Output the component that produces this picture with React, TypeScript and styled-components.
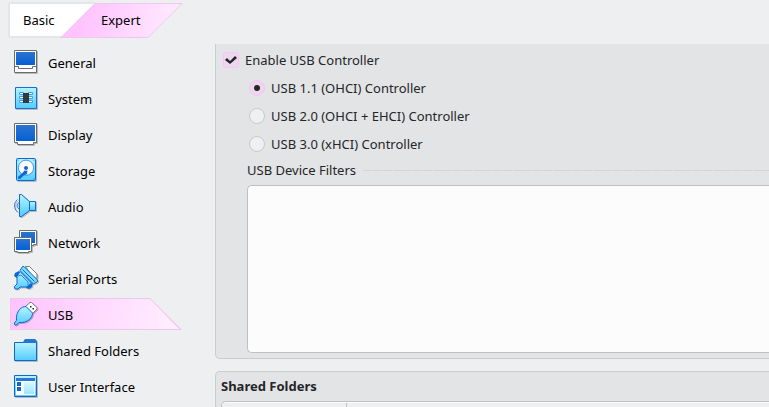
import React, { useState } from "react";
import styled, { createGlobalStyle, css } from "styled-components";

const GlobalStyle = createGlobalStyle`
  * { box-sizing: border-box; }
  body {
    margin: 0;
    background: #eeeff1;
    color: #232629;
    font: 13px/20px "Noto Sans", sans-serif;
  }
  button, input { font: inherit; color: inherit; margin: 0; }
`;

const Page = styled.div`
  display: flex;
  flex-direction: column;
  height: 100vh;
  overflow: hidden;
`;

const TabBar = styled.header`
  display: flex;
  flex: none;
  padding: 2px 8px 6px;
`;

const shape = css`
  content: "";
  position: absolute;
  inset: 0;
  z-index: -1;
`;

const Tab = styled.button<{ $active?: boolean }>`
  position: relative;
  isolation: isolate;
  height: 36px;
  border: 0;
  background: none;
  color: #000;
  text-align: left;
  ${(p) =>
    p.$active
      ? css`
          width: 123px;
          margin-left: -36px;
          padding: 0 0 0 41px;
          &::before {
            ${shape}
            top: 1px;
            background: #f0c6ef;
            clip-path: polygon(35px 0, 100% 0, calc(100% - 35px) 100%, 0 100%);
          }
          &::after {
            ${shape}
            top: 1px;
            background: linear-gradient(105deg, #ffc3ff 20%, #ffeeff);
            clip-path: polygon(35px 1px, calc(100% - 2px) 1px, calc(100% - 35px) calc(100% - 1px), 2px calc(100% - 1px));
          }
        `
      : css`
          width: 88px;
          padding: 0 0 0 15px;
          &::before {
            ${shape}
            background: #fff;
            border: 2px solid #e5e6e8;
            border-radius: 2px 0 0 2px;
            clip-path: polygon(0 0, 100% 0, calc(100% - 36px) 100%, 0 100%);
          }
        `}
`;

const Body = styled.div`
  display: grid;
  grid-template-columns: 215px minmax(0, 1fr);
  flex: 1;
  min-height: 0;
`;

const Sidebar = styled.nav`
  display: flex;
  flex-direction: column;
  gap: 4px;
  padding: 2px 33px 0 10px;
`;

const NavItem = styled.button<{ $active: boolean }>`
  position: relative;
  isolation: isolate;
  display: flex;
  flex: none;
  align-items: center;
  gap: 10px;
  height: 32px;
  padding: 2px 4px 0;
  border: 0;
  background: none;
  color: #000;
  ${(p) =>
    p.$active &&
    css`
      &::before {
        ${shape}
        background: #f0c6ef;
        clip-path: polygon(0 0, calc(100% - 32px) 0, 100% 100%, 0 100%);
      }
      &::after {
        ${shape}
        background: linear-gradient(100deg, #ffc3ff, #fff0ff);
        clip-path: polygon(1px 1px, calc(100% - 32px) 1px, calc(100% - 3px) calc(100% - 1px), 1px calc(100% - 1px));
      }
    `}
`;

const IconSvg = styled.svg`
  flex: none;
  width: 24px;
  height: 24px;
  margin-top: -2px;
  overflow: visible;
  filter: drop-shadow(1px 1px 0 rgba(0, 0, 0, 0.22));
`;

const Content = styled.main`
  display: flex;
  flex-direction: column;
  gap: 12px;
  overflow: hidden;
`;

const Panel = styled.section<{ $cut?: boolean }>`
  flex: none;
  border: 1px solid #cbcccd;
  border-right: 0;
  background: #e3e4e5;
  ${(p) =>
    p.$cut
      ? css`
          border-top: 0;
          border-radius: 0 0 0 5px;
          padding: 2px 0 5px 7px;
        `
      : css`
          border-radius: 5px 0 0 0;
          padding: 4px 0 5px 5px;
        `}
`;

const Option = styled.label`
  display: flex;
  align-items: center;
  gap: 6px;
  height: 28px;
`;

const Options = styled.div`
  padding-left: 26px;
`;

const controlLook = css`
  appearance: none;
  display: grid;
  place-items: center;
  flex: none;
  width: 16px;
  height: 16px;
  border: 1px solid #c8c9cb;
  background: #eff0f1;
  &:checked {
    border-color: #fcc1fa;
    background: #ecd8ec;
  }
`;

const Check = styled.input`
  ${controlLook}
  border-radius: 3px;
  &:checked::before {
    content: "";
    width: 12px;
    height: 10px;
    background: #232629;
    clip-path: polygon(0 5px, 2px 3px, 5px 6px, 10px 1px, 12px 3px, 5px 9px);
  }
`;

const Radio = styled.input`
  ${controlLook}
  border-radius: 50%;
  &:checked::before {
    content: "";
    width: 6px;
    height: 6px;
    border-radius: 50%;
    background: #232629;
  }
`;

const Filters = styled.div`
  padding-left: 24px;
`;

const FiltersTitle = styled.div`
  display: flex;
  align-items: center;
  gap: 7px;
  height: 24px;
  margin-bottom: 3px;
  &::after {
    content: "";
    flex: 1;
    height: 1px;
    background: repeating-linear-gradient(90deg, #d3d4d5 0 9px, transparent 9px 10px);
  }
`;

const FilterList = styled.div`
  min-height: 168px;
  border: 1px solid #bfc0c2;
  border-right: 0;
  border-radius: 5px 0 0 5px;
  background: #fcfcfc;
`;

const Heading = styled.h2`
  margin: 0 0 5px;
  font-size: 13px;
  line-height: 20px;
  font-weight: 700;
`;

const FolderFrame = styled.div`
  border: 1px solid #bfc0c2;
  border-right: 0;
  border-radius: 5px 0 0 5px;
  background: #fcfcfc;
  padding-top: 1px;
  overflow: hidden;
`;

const FolderTable = styled.table`
  width: 100%;
  border-spacing: 0;
  th {
    height: 26px;
    padding: 0;
    background: #eeeff1;
  }
  th:first-child {
    width: 125px;
    border-right: 1px solid #bfc0c2;
  }
`;

const line = "#0d67d4";
const frame = "#6b6b6d";

const drawings: Record<string, React.ReactNode> = {
  General: (
    <>
      <path d="M.5.5h22v22H.5z" fill="#fff" stroke={frame} />
      <path d="M2 2h19v13H2z" fill="url(#deep)" />
      <path d="M1 16.500h3.500v2h14v-2H22" fill="none" stroke={frame} />
    </>
  ),
  System: (
    <>
      <path d="M1.500 1.500h21v21h-21z" fill="url(#sky)" stroke="#176fd6" />
      <path
        d="M5.500 6.500h4v2h-4zM5.500 10.500h4v2h-4zM5.500 14.500h4v2h-4zM14.500 6.500h4v2h-4zM14.500 10.500h4v2h-4zM14.500 14.500h4v2h-4z"
        fill="#fff"
        stroke="#3f9fd8"
      />
      <path d="M9 7h6v10H9z" fill="#32383d" />
    </>
  ),
  Display: (
    <>
      <path d="M.5 1.500h22v19h-3v2h-16v-2h-3z" fill="#fff" stroke={frame} />
      <path d="M2 3h19v16H2z" fill="url(#deep)" />
    </>
  ),
  Storage: (
    <>
      <rect x="2.500" y=".5" width="19" height="22" rx="1" fill="url(#sky)" stroke={line} />
      <circle cx="12" cy="9.700" r="7.600" fill="#fff" stroke="#3e9ae4" />
      <path d="M4 19l4-3.500 2.500-3 3 .3-.5 3.200-3.500 1.500L6 21l-2-.5z" fill={line} />
      <circle cx="12" cy="10" r="2" fill={line} />
      <path d="M3.500 1.500h1v1h-1zM19.500 1.500h1v1h-1zM19.500 20.500h1v1h-1z" fill={line} />
    </>
  ),
  Audio: (
    <>
      <path d="M15.500 7.500h6v9h-6z" fill="url(#sky)" stroke={line} />
      <path d="M5.500.500H7.500L15.500 7.500v9L7.500 22.500h-2z" fill="url(#sky)" stroke={line} strokeLinejoin="round" />
      <path d="M3.500 5.500C-.5 9-.5 14.500 3.500 18M5 8.500c-2.500 1.500-2.500 5 0 6.500" fill="none" stroke="#2d7bd6" />
    </>
  ),
  Network: (
    <>
      <path d="M5.500.5h17v14h-3v1h-11v-1h-3z" fill="#fff" stroke={frame} />
      <path d="M7 2h14v11H7z" fill="url(#deep)" />
      <path d="M.5 7.500h17v14h-3v1h-11v-1h-3z" fill="#fff" stroke={frame} />
      <path d="M2 9h14v11H2z" fill="url(#deep)" />
    </>
  ),
  "Serial Ports": (
    <>
      <path d="M11.500.5h4L23 8v4l-3 1z" fill="#fff" stroke="#77797c" strokeLinejoin="round" />
      <path d="M0 10l1-3 4-2 1 3-3 4zM12 22l3-4 4-1-1 4-3 2z" fill={line} />
      <path
        d="M.5 22.500v-2L3 18v-7.500l3-5L17.500 17l-4.500 4H6l-2 2H1.500z"
        fill="url(#sky)"
        stroke={line}
        strokeLinejoin="round"
      />
      <path d="M4 10l3-1 7 7v4" fill="none" stroke="#2b86dc" />
      <path
        d="M6 4.500L8.500.500H10L23.500 14v1.500L19.500 18z"
        fill="#7bdcff"
        stroke={line}
        strokeLinejoin="round"
      />
      <path d="M8.500 3.500l12 12" fill="none" stroke={line} />
    </>
  ),
  USB: (
    <>
      <path d="M11.500 4.500L16 .5h1.500l5.500 5v1.500l-5 5z" fill="#fff" stroke="#77797c" strokeLinejoin="round" />
      <path d="M16 4h1.500v1.500H16zM18.500 6H20v1.500h-1.500z" fill="#222" />
      <path
        d="M.5 22.500V20.500L2.500 18.500C2 14.500 3 10.500 5.500 7.500C7.500 5.500 9.500 4.500 12 4.500L18.500 11C18.500 13.500 17.500 15.500 15.500 17.500C12.500 20 9 21 5 20.500L2.500 23H1z"
        fill="url(#sky)"
        stroke={line}
        strokeLinejoin="round"
      />
    </>
  ),
  "Shared Folders": (
    <>
      <path d="M.5 4.500h22v18H.5z" fill="url(#sky)" stroke={line} />
      <path d="M9 5V4l2-3h10l2 2v2z" fill="#2874d3" />
    </>
  ),
  "User Interface": (
    <>
      <path d="M.5 1.500h22v21H.5z" fill="url(#sky)" stroke={line} />
      <path d="M2 4h19v17H2z" fill="#fff" />
      <path d="M2 4h19v3H2z" fill="#2a76d0" />
      <path d="M3 8h4v4H3zM3 13h4v4H3z" fill={line} />
      <path d="M10 8h10v12H10z" fill="url(#pale)" />
    </>
  ),
};

const Gradients = styled.svg`
  position: absolute;
  width: 0;
  height: 0;
`;

const options = ["USB 1.1 (OHCI) Controller", "USB 2.0 (OHCI + EHCI) Controller", "USB 3.0 (xHCI) Controller"];

export default function App() {
  const [section, setSection] = useState("USB");
  const [enabled, setEnabled] = useState(true);
  const [controller, setController] = useState(0);

  return (
    <Page>
      <GlobalStyle />
      <Gradients aria-hidden="true">
        <linearGradient id="sky" x2="0" y2="1">
          <stop stopColor="#b5f4ff" />
          <stop offset="1" stopColor="#52cbff" />
        </linearGradient>
        <linearGradient id="deep" x2="0" y2="1">
          <stop stopColor="#2b74d1" />
          <stop offset="1" stopColor="#0560d4" />
        </linearGradient>
        <linearGradient id="pale" x2="0" y2="1">
          <stop stopColor="#d4f8ff" />
          <stop offset="1" stopColor="#9fe5ff" />
        </linearGradient>
      </Gradients>
      <TabBar>
        <Tab type="button">Basic</Tab>
        <Tab type="button" $active>Expert</Tab>
      </TabBar>
      <Body>
        <Sidebar>
          {Object.keys(drawings).map((name) => (
            <NavItem key={name} type="button" $active={section === name} onClick={() => setSection(name)}>
              <IconSvg viewBox="0 0 24 24" aria-hidden="true">{drawings[name]}</IconSvg>
              {name}
            </NavItem>
          ))}
        </Sidebar>
        <Content>
          <Panel $cut>
            <Option>
              <Check type="checkbox" checked={enabled} onChange={(e) => setEnabled(e.target.checked)} />
              Enable USB Controller
            </Option>
            <Options>
              {options.map((text, i) => (
                <Option key={text}>
                  <Radio type="radio" name="controller" checked={controller === i} onChange={() => setController(i)} />
                  {text}
                </Option>
              ))}
            </Options>
            <Filters>
              <FiltersTitle id="filters">USB Device Filters</FiltersTitle>
              <FilterList role="listbox" aria-labelledby="filters" />
            </Filters>
          </Panel>
          <Panel>
            <Heading>Shared Folders</Heading>
            <FolderFrame>
              <FolderTable>
                <thead>
                  <tr>
                    <th scope="col" />
                    <th scope="col" />
                  </tr>
                </thead>
              </FolderTable>
            </FolderFrame>
          </Panel>
        </Content>
      </Body>
    </Page>
  );
}
